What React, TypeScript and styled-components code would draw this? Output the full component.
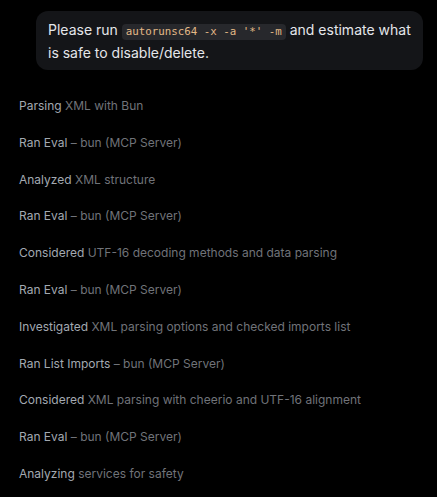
import React from 'react';
import styled, { createGlobalStyle } from 'styled-components';

const GlobalStyle = createGlobalStyle`
	html, body {
		margin: 0;
		padding: 0;
		background: #000000;
	}
	body {
		font-family: Inter, "Noto Sans", "Liberation Sans", sans-serif;
		-webkit-font-smoothing: antialiased;
	}
`;

const Page = styled.div`
	min-height: 100vh;
	box-sizing: border-box;
	padding: 11px 14px 0 19px;
	display: flex;
	flex-direction: column;
`;

const Bubble = styled.div`
	align-self: flex-end;
	box-sizing: border-box;
	width: 387px;
	background: #141518;
	border-radius: 12px;
	padding: 7px 8px 6px 12px;
	color: #e4e6ea;
	font-size: 14px;
	line-height: 23px;
`;

const Code = styled.code`
	font-family: "DejaVu Sans Mono", "Liberation Mono", monospace;
	font-size: 10.8px;
	line-height: 16px;
	display: inline-block;
	color: #e3b987;
	background: #27282c;
	border-radius: 4px;
	padding: 0 4px;
`;

const Steps = styled.div`
	margin-top: 26px;
	display: flex;
	flex-direction: column;
	gap: 16.8px;
`;

const Step = styled.div`
	font-size: 12px;
	line-height: 20px;
	color: #707379;
	white-space: nowrap;
	> .verb {
		color: #a3a9b1;
	}
`;

const steps: [string, string][] = [
	['Parsing', ' XML with Bun'],
	['Ran Eval', ' – bun (MCP Server)'],
	['Analyzed', ' XML structure'],
	['Ran Eval', ' – bun (MCP Server)'],
	['Considered', ' UTF-16 decoding methods and data parsing'],
	['Ran Eval', ' – bun (MCP Server)'],
	['Investigated', ' XML parsing options and checked imports list'],
	['Ran List Imports', ' – bun (MCP Server)'],
	['Considered', ' XML parsing with cheerio and UTF-16 alignment'],
	['Ran Eval', ' – bun (MCP Server)'],
	['Analyzing', ' services for safety'],
];

const App: React.FC = () => {
	return (
		<>
			<GlobalStyle/>
			<Page>
				<Bubble>
					Please run <Code>autorunsc64 -x -a '*' -m</Code> and estimate what is safe to disable/delete.
				</Bubble>
				<Steps>
					{steps.map(([verb, rest], i) => (
						<Step key={i}>
							<span className="verb">{verb}</span>{rest}
						</Step>
					))}
				</Steps>
			</Page>
		</>
	);
};

export default App;
